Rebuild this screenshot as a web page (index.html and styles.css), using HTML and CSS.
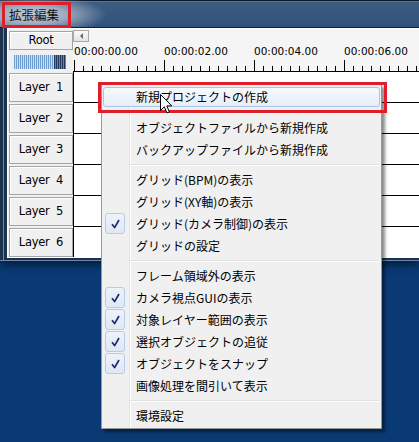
FILE: index.html
```html
<!DOCTYPE html>
<html lang="ja">
<head>
<meta charset="utf-8">
<title>拡張編集</title>
<link rel="stylesheet" href="styles.css">
</head>
<body>
<div class="window">
  <div class="titlebar"><span class="title">拡張編集</span></div>
  <div class="frame">
    <div class="client">
      <div class="side-head">
        <div class="btn root">Root</div>
        <div class="meter"><div class="meter-dark"></div></div>
      </div>
      <div class="ruler">
        <div class="scroll-btn"><span class="tri"></span></div>
        <div class="labels"><span>00:00:00.00</span><span>00:00:02.00</span><span>00:00:04.00</span><span>00:00:06.00</span></div>
        <div class="ticks"></div>
      </div>
      <div class="layer"><div class="btn lbtn">Layer  1</div></div>
      <div class="track"></div>
      <div class="layer"><div class="btn lbtn">Layer  2</div></div>
      <div class="track"></div>
      <div class="layer"><div class="btn lbtn">Layer  3</div></div>
      <div class="track"></div>
      <div class="layer"><div class="btn lbtn">Layer  4</div></div>
      <div class="track"></div>
      <div class="layer"><div class="btn lbtn">Layer  5</div></div>
      <div class="track"></div>
      <div class="layer"><div class="btn lbtn">Layer  6</div></div>
      <div class="track last"></div>
    </div>
  </div>
</div>

<div class="menu">
  <div class="item hot">新規プロジェクトの作成</div>
  <div class="sep first"></div>
  <div class="item">オブジェクトファイルから新規作成</div>
  <div class="item">バックアップファイルから新規作成</div>
  <div class="sep"></div>
  <div class="item">グリッド(BPM)の表示</div>
  <div class="item">グリッド(XY軸)の表示</div>
  <div class="item"><span class="check"><svg width="9" height="10" viewBox="0 0 9 10"><path d="M1 5.2 L3.6 8.6 L8 1" fill="none" stroke="#1d2a70" stroke-width="1.7" stroke-linejoin="round"/></svg></span>グリッド(カメラ制御)の表示</div>
  <div class="item">グリッドの設定</div>
  <div class="sep"></div>
  <div class="item">フレーム領域外の表示</div>
  <div class="item"><span class="check"><svg width="9" height="10" viewBox="0 0 9 10"><path d="M1 5.2 L3.6 8.6 L8 1" fill="none" stroke="#1d2a70" stroke-width="1.7" stroke-linejoin="round"/></svg></span>カメラ視点GUIの表示</div>
  <div class="item"><span class="check"><svg width="9" height="10" viewBox="0 0 9 10"><path d="M1 5.2 L3.6 8.6 L8 1" fill="none" stroke="#1d2a70" stroke-width="1.7" stroke-linejoin="round"/></svg></span>対象レイヤー範囲の表示</div>
  <div class="item"><span class="check"><svg width="9" height="10" viewBox="0 0 9 10"><path d="M1 5.2 L3.6 8.6 L8 1" fill="none" stroke="#1d2a70" stroke-width="1.7" stroke-linejoin="round"/></svg></span>選択オブジェクトの追従</div>
  <div class="item"><span class="check"><svg width="9" height="10" viewBox="0 0 9 10"><path d="M1 5.2 L3.6 8.6 L8 1" fill="none" stroke="#1d2a70" stroke-width="1.7" stroke-linejoin="round"/></svg></span>オブジェクトをスナップ</div>
  <div class="item">画像処理を間引いて表示</div>
  <div class="sep"></div>
  <div class="item">環境設定</div>
</div>

<div class="mark mark-title"></div>
<div class="mark mark-item"></div>

<svg class="cursor" width="13" height="21" viewBox="0 0 13 21">
  <path d="M0.5 0.5 L0.5 16.5 L4.3 12.8 L7 19 L9.4 18 L6.8 11.9 L11.8 11.9 Z" fill="#fff" stroke="#000" stroke-width="1" stroke-linejoin="miter"/>
</svg>
</body>
</html>
```

FILE: styles.css
```css
html, body {
  margin: 0;
  padding: 0;
}

body {
  width: 419px;
  height: 442px;
  overflow: hidden;
  position: relative;
  background: #093a74;
  font-family: "DejaVu Sans", Verdana, sans-serif;
}

.window {
  width: 419px;
  box-shadow: 0 3px 9px rgba(0, 0, 0, 0.6);
}

.titlebar {
  height: 27px;
  border-bottom: 1px solid #0f1e33;
  padding-left: 9px;
  box-sizing: content-box;
  background:
    radial-gradient(ellipse 75px 20px at 32px 15px, rgba(205, 212, 222, 0.95) 0%, rgba(190, 200, 214, 0.75) 45%, rgba(120, 140, 165, 0) 100%),
    linear-gradient(to bottom, #0c1829 0, #0c1829 1px, #5c7594 1px, #5c7594 2px, #3d5d83 2px, #30517a 100%);
}

.title {
  display: block;
  font-family: "Noto Sans CJK JP", sans-serif;
  font-size: 12.5px;
  line-height: 27px;
  padding-top: 1px;
  height: 26px;
  color: #111;
}

.frame {
  padding-left: 7px;
  padding-bottom: 2px;
  border-bottom: 1px solid #6f88a6;
  background: linear-gradient(to right, #1b3150 0, #1b3150 3px, #6f88a6 3px, #6f88a6 4px, #1b3150 4px);
}

.client {
  border-top: 1px solid #fff;
  border-left: 1px solid #fff;
  border-bottom: 1px solid #fff;
  display: grid;
  grid-template-columns: 65px 1fr;
  grid-template-rows: 43px repeat(5, 31px) 30px;
  background: #f0f0f0;
}

.btn {
  box-sizing: border-box;
  background: #f0f0f0;
  border: 1px solid #a4a4a4;
  box-shadow: inset 1px 1px 0 #fff;
  color: #000;
  font-size: 11.5px;
  letter-spacing: -0.3px;
  text-align: center;
  white-space: pre;
}

.side-head {
  padding: 2px 0 0 1px;
}

.root {
  width: 64px;
  height: 19px;
  line-height: 17px;
}

.meter {
  margin: 5px 0 0 5px;
  width: 52px;
  height: 14px;
  position: relative;
  background: repeating-linear-gradient(to right, #6e9ed2 0, #6e9ed2 1px, #c9dcf0 1px, #c9dcf0 2px);
}

.meter-dark {
  position: absolute;
  right: 0;
  top: 0;
  bottom: 0;
  width: 12px;
  background: repeating-linear-gradient(to right, #22375a 0, #22375a 1px, #6b7f9f 1px, #6b7f9f 2px);
}

.ruler {
  background: #f5f5f5;
  border-bottom: 1px solid #000;
  padding-top: 1px;
  overflow: hidden;
}

.scroll-btn {
  width: 16px;
  height: 12px;
  box-sizing: border-box;
  border: 1px solid #a8a8a8;
  background: linear-gradient(#fafafa, #e4e4e4);
  display: flex;
  align-items: center;
  justify-content: center;
}

.tri {
  width: 0;
  height: 0;
  border-top: 3px solid transparent;
  border-bottom: 3px solid transparent;
  border-right: 3px solid #6a6a6a;
}

.labels {
  margin-top: 2px;
  padding-left: 1px;
  height: 14px;
  white-space: nowrap;
  font-size: 10.5px;
  line-height: 14px;
  color: #000;
}

.labels span {
  display: inline-block;
  width: 90px;
}

.ticks {
  margin: 2px 0 0 1px;
  height: 11px;
  background:
    linear-gradient(to right, #000 1px, transparent 1px) 0 100% / 9px 5px repeat-x,
    linear-gradient(to right, #000 1px, transparent 1px) 0 0 / 90px 11px repeat-x;
}

.layer {
  padding: 1px 0 0 1px;
}

.lbtn {
  width: 64px;
  height: 29px;
  line-height: 27px;
}

.track {
  background: #fff;
  border-left: 1px solid #000;
  border-bottom: 1px solid #000;
}

.track.last {
  border-bottom: none;
}

/* context menu */
.menu {
  position: absolute;
  left: 101px;
  top: 84px;
  width: 281px;
  box-sizing: border-box;
  border: 1px solid #979797;
  padding: 1px;
  background:
    linear-gradient(to right, transparent 27px, #e2e3e3 27px, #e2e3e3 28px, #fff 28px, #fff 29px, transparent 29px),
    #f0f0f0;
  box-shadow: 3px 3px 3px rgba(0, 0, 0, 0.45);
  font-family: "Noto Sans CJK JP", sans-serif;
  font-size: 12px;
  color: #000;
}

.item {
  position: relative;
  height: 22px;
  line-height: 22px;
  padding-left: 33px;
  white-space: nowrap;
}

.item.hot::before {
  content: "";
  position: absolute;
  left: 0;
  right: 0;
  top: 1px;
  bottom: 1px;
  border: 1px solid #a9c6ea;
  border-radius: 3px;
  background: linear-gradient(to bottom, #f6f9fd, #e6eef9);
  z-index: -1;
}

.item.hot {
  z-index: 0;
}

.check {
  position: absolute;
  left: 2px;
  top: 0;
  width: 20px;
  height: 21px;
  box-sizing: border-box;
  border: 1px solid #b6cbe8;
  border-radius: 3px;
  background: linear-gradient(to bottom, #eef3fa, #dfe8f6);
  display: flex;
  align-items: center;
  justify-content: center;
}

.sep {
  height: 8px;
  margin-left: 27px;
  margin-right: 1px;
  background: linear-gradient(to bottom, transparent 3px, #e0e0e0 3px, #e0e0e0 4px, #fff 4px, #fff 5px, transparent 5px);
}

.sep.first {
  height: 9px;
  background: linear-gradient(to bottom, transparent 4px, #e0e0e0 4px, #e0e0e0 5px, #fff 5px, #fff 6px, transparent 6px);
}

/* red highlight marks */
.mark {
  position: absolute;
  box-sizing: border-box;
  border: 3px solid #e01e2b;
}

.mark-title {
  left: 2px;
  top: 2px;
  width: 69px;
  height: 26px;
}

.mark-item {
  left: 98px;
  top: 82px;
  width: 289px;
  height: 31px;
}

.cursor {
  position: absolute;
  left: 160px;
  top: 94px;
}
```
